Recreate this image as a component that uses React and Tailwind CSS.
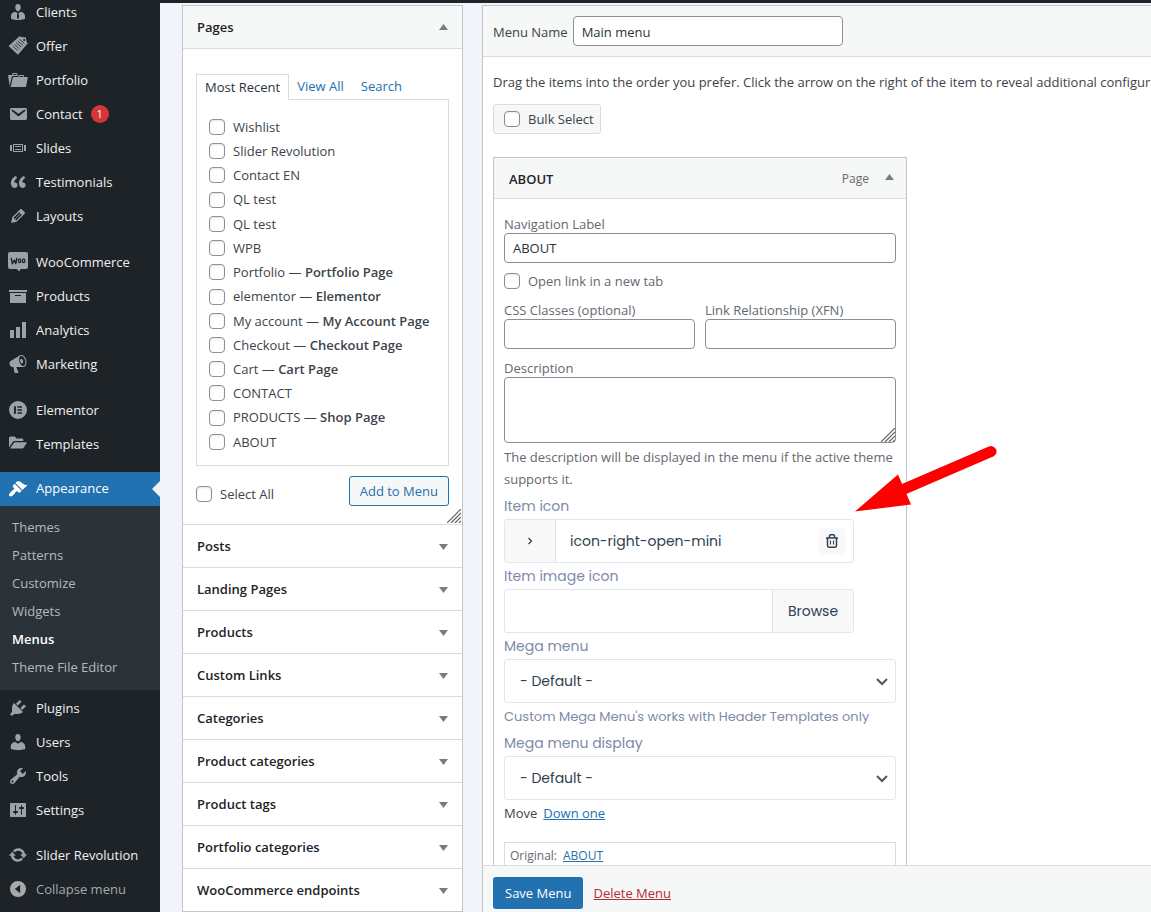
const sidebarGroups = [
  [
    { label: 'Clients', icon: 'businessman' },
    { label: 'Offer', icon: 'offer' },
    { label: 'Portfolio', icon: 'portfolio' },
    { label: 'Contact', icon: 'email', badge: 1 },
    { label: 'Slides', icon: 'slides' },
    { label: 'Testimonials', icon: 'quote' },
    { label: 'Layouts', icon: 'edit' },
  ],
  [
    { label: 'WooCommerce', icon: 'woo' },
    { label: 'Products', icon: 'archive' },
    { label: 'Analytics', icon: 'chart' },
    { label: 'Marketing', icon: 'megaphone' },
  ],
  [
    { label: 'Elementor', icon: 'elementor' },
    { label: 'Templates', icon: 'folder' },
  ],
];

const appearanceLinks = ['Themes', 'Patterns', 'Customize', 'Widgets', 'Menus', 'Theme File Editor'];

const toolItems = [
  { label: 'Plugins', icon: 'plugins' },
  { label: 'Users', icon: 'users' },
  { label: 'Tools', icon: 'tools' },
  { label: 'Settings', icon: 'settings' },
];

const pages = [
  { title: 'Wishlist' },
  { title: 'Slider Revolution' },
  { title: 'Contact EN' },
  { title: 'QL test' },
  { title: 'QL test' },
  { title: 'WPB' },
  { title: 'Portfolio', state: 'Portfolio Page' },
  { title: 'elementor', state: 'Elementor' },
  { title: 'My account', state: 'My Account Page' },
  { title: 'Checkout', state: 'Checkout Page' },
  { title: 'Cart', state: 'Cart Page' },
  { title: 'CONTACT' },
  { title: 'PRODUCTS', state: 'Shop Page' },
  { title: 'ABOUT' },
];

const sections = [
  'Posts',
  'Landing Pages',
  'Products',
  'Custom Links',
  'Categories',
  'Product categories',
  'Product tags',
  'Portfolio categories',
  'WooCommerce endpoints',
];

const iconPaths = {
  businessman:
    'M7.3 6l-.03-.19c-.04-.37-.05-.73-.03-1.08.02-.36.1-.71.25-1.04.14-.32.31-.61.52-.86s.49-.46.83-.6c.34-.15.72-.23 1.13-.23.69 0 1.26.2 1.71.59s.76.87.91 1.44.18 1.16.09 1.78l-.03.19c-.01.09-.05.25-.11.48-.05.24-.12.47-.2.69-.08.21-.19.45-.34.72-.14.27-.3.49-.47.69-.18.19-.4.34-.67.48-.27.13-.55.19-.86.19s-.59-.06-.87-.19c-.26-.13-.49-.29-.67-.5-.18-.2-.34-.42-.49-.66-.15-.25-.26-.49-.34-.73-.09-.25-.16-.47-.21-.67-.06-.21-.1-.37-.12-.5zm9.2 6.24c.41.7.5 1.41.5 2.14v2.49c0 .03-.12.08-.29.13-.18.04-.42.13-.97.27-.55.12-1.1.24-1.65.34s-1.19.19-1.95.27c-.75.08-1.46.12-2.13.12-.68 0-1.39-.04-2.14-.12-.75-.07-1.4-.17-1.98-.27-.58-.11-1.08-.23-1.56-.34-.49-.11-.8-.21-1.06-.29L3 16.87v-2.49c0-.75.07-1.46.46-2.15s.81-1.25 1.5-1.68C5.66 10.12 7.19 10 8 10l1.67 1.67L9 13v3l1.02 1.08L11 16v-3l-.68-1.33L11.97 10c.77 0 2.2.07 2.9.52.71.45 1.21 1.02 1.63 1.72z',
  portfolio:
    'M4 5H.78c-.37 0-.74.32-.69.84l1.56 9.99S3.5 8.47 3.86 6.7c.11-.53.61-.7.98-.7H10s-.7-2.08-.77-2.31C9.11 3.25 8.89 3 8.45 3H5.14c-.36 0-.7.23-.8.64C4.25 4.04 4 5 4 5zm4.88 0h-4s.42-1 .87-1h2.13c.48 0 1 1 1 1zM2.67 16.25c-.31.47-.76.75-1.26.75h15.73c.54 0 .92-.31 1.03-.83.44-2.19 1.68-8.44 1.68-8.44.07-.5-.3-.73-.62-.73H16V5.53c0-.16-.26-.53-.66-.53h-3.76c-.52 0-.87.58-.87.58L10 7H5.59c-.32 0-.63.19-.69.5 0 0-1.59 6.7-1.72 7.33-.07.37-.22.99-.51 1.42zM15.38 7H11s.58-1 1.13-1h2.29c.71 0 .96 1 .96 1z',
  email:
    'M3.87 4h13.25C18.37 4 19 4.59 19 5.79v8.42c0 1.19-.63 1.79-1.88 1.79H3.87c-1.25 0-1.88-.6-1.88-1.79V5.79c0-1.2.63-1.79 1.88-1.79zm6.62 8.6l6.74-5.53c.24-.2.43-.66.13-1.07-.29-.41-.82-.42-1.17-.17l-5.7 3.86L4.8 5.83c-.35-.25-.88-.24-1.17.17-.3.41-.11.87.13 1.07z',
  slides: 'M5 14V6h10v8H5zm-3-1V7h2v6H2zm4-6v6h8V7H6zm10 0h2v6h-2V7zm-3 2V8H7v1h6zm0 3v-1H7v1h6z',
  quote:
    'M9.49 13.22c0-.74-.2-1.38-.61-1.9-.62-.78-1.83-.88-2.53-.72-.29-1.65 1.11-3.75 2.92-4.65L7.88 4c-2.73 1.3-5.42 4.28-4.96 8.05C3.21 14.43 4.59 16 6.54 16c.85 0 1.56-.25 2.12-.75s.83-1.18.83-2.03zm8.05 0c0-.74-.2-1.38-.61-1.9-.63-.78-1.83-.88-2.53-.72-.29-1.65 1.11-3.75 2.92-4.65L15.93 4c-2.73 1.3-5.41 4.28-4.95 8.05.29 2.38 1.66 3.95 3.61 3.95.85 0 1.56-.25 2.12-.75s.83-1.18.83-2.03z',
  edit:
    'M13.89 3.39l2.71 2.72c.46.46.42 1.24.03 1.64l-8.01 8.02-5.56 1.16 1.16-5.58s7.6-7.63 7.99-8.03c.39-.39 1.22-.39 1.68.07zm-2.73 2.79l-5.59 5.61 1.11 1.11 5.54-5.65zm-2.97 8.23l5.58-5.6-1.07-1.08-5.59 5.6z',
  archive: 'M19 4v2H1V4h18zM2 7h16v10H2V7zm11 3V9H7v1h6z',
  chart: 'M18 18V2h-4v16h4zm-6 0V7H8v11h4zm-6 0v-8H2v8h4z',
  megaphone:
    'M18.15 5.94c.46 1.62.38 3.22-.02 4.48-.42 1.28-1.26 2.18-2.3 2.48-.16.06-.26.06-.4.06-.06.02-.12.02-.18.02-.06.02-.14.02-.22.02h-6.8l2.22 5.5c.02.14-.06.26-.14.34-.08.1-.24.16-.34.16H6.95c-.1 0-.26-.06-.34-.16-.08-.08-.16-.2-.14-.34l-1-5.5H4.25l-.02-.02c-.5.06-1.08-.18-1.54-.62s-.88-1.08-1.06-1.88c-.24-.8-.2-1.56-.02-2.2.18-.62.58-1.08 1.06-1.3l.02-.02 9-5.4c.1-.06.18-.1.24-.16.06-.04.14-.08.24-.12.16-.08.28-.12.5-.18 1.04-.3 2.24.1 3.22.98s1.84 2.24 2.26 3.86zm-2.58 5.98h-.02c.4-.1.74-.34 1.04-.7.58-.7.86-1.76.86-3.04 0-.64-.1-1.3-.28-1.98-.34-1.36-1.02-2.5-1.78-3.24s-1.68-1.1-2.46-.88c-.82.22-1.4.96-1.7 2-.32 1.04-.28 2.36.06 3.72.38 1.36 1 2.5 1.8 3.24.78.74 1.62 1.1 2.48.88zm-2.54-7.08c.22-.04.42-.02.62.04.38.16.76.48 1.02 1s.42 1.2.42 1.78c0 .3-.04.56-.12.8-.18.48-.44.84-.86.94-.34.1-.8-.06-1.14-.4s-.64-.86-.78-1.5c-.18-.62-.12-1.24.02-1.72s.48-.84.82-.94z',
  elementor: 'M10 1a9 9 0 100 18 9 9 0 000-18zM6 6.2h1.9v7.6H6V6.2zm3.4 0H14v1.5H9.4V6.2zm0 3H14v1.5H9.4V9.2zm0 3.1H14v1.5H9.4v-1.5z',
  folder: 'M1 13.5V4q0-1.500 1.500-1.500h4.200l1.800 2H14q1.300 0 1.300 1.300V7H7.200Q5.500 7 4.600 8.200L1 13.500zm1 1L5.800 9q.5-.8 1.600-.8h11q.8 0 .3.800l-3 4.700q-.5.800-1.500.800H2z',
  appearance:
    'M14.48 11.06L7.41 3.99l1.5-1.5c.5-.56 2.3-.47 3.51.32 1.21.8 1.43 1.28 2.91 2.1 1.18.64 2.45 1.26 4.45.85zm-.71.71L6.7 4.7 4.93 6.47c-.39.39-.39 1.02 0 1.41l1.06 1.06c.39.39.39 1.03 0 1.42-.6.6-1.43 1.11-2.21 1.69-.35.26-.7.53-1.01.84C1.43 14.23.4 16.08 1.4 17.07c.99 1 2.84-.03 4.18-1.36.31-.31.58-.66.85-1.02.57-.78 1.08-1.61 1.69-2.21.39-.39 1.02-.39 1.41 0l1.06 1.06c.39.39 1.02.39 1.41 0z',
  plugins:
    'M13.11 4.36L9.87 7.6 8 5.73l3.24-3.24c.35-.34 1.05-.2 1.56.32.52.51.66 1.21.31 1.55zm-8 1.77l.91-1.12 9.01 9.01-1.19.84c-.71.71-2.63 1.16-3.82 1.16H6.14L4.9 17.26c-.59.59-1.54.59-2.12 0-.59-.58-.59-1.53 0-2.12l1.24-1.24v-3.88c0-1.13.4-3.19 1.09-3.89zm7.26 3.97l3.24-3.24c.34-.35 1.04-.21 1.55.31.52.51.66 1.21.31 1.55l-3.24 3.25z',
  users:
    'M10 9.25c-2.27 0-2.73-3.44-2.73-3.44C7 4.02 7.82 2 9.97 2c2.16 0 2.98 2.02 2.71 3.81 0 0-.41 3.44-2.68 3.44zm0 2.57L12.72 10c2.39 0 4.52 2.33 4.52 4.53v2.49s-3.65 1.13-7.24 1.13c-3.65 0-7.24-1.13-7.24-1.13v-2.49c0-2.25 1.94-4.48 4.47-4.48z',
  tools:
    'M16.68 9.77c-1.34 1.34-3.3 1.67-4.95.99l-5.41 6.52c-.99.99-2.59.99-3.58 0s-.99-2.59 0-3.57l6.52-5.42c-.68-1.65-.35-3.61.99-4.95 1.28-1.28 3.12-1.62 4.72-1.06l-2.89 2.89 2.82 2.82 2.86-2.87c.53 1.58.18 3.39-1.08 4.65zM3.81 16.21c.4.39 1.04.39 1.43 0 .4-.4.4-1.04 0-1.43-.39-.4-1.03-.4-1.43 0-.39.39-.39 1.03 0 1.43z',
  settings:
    'M18 16V4c0-.55-.45-1-1-1H3c-.55 0-1 .45-1 1v12c0 .55.45 1 1 1h14c.55 0 1-.45 1-1zM8 11h1c.55 0 1 .45 1 1s-.45 1-1 1H8v1.500c0 .28-.22.5-.5.5s-.5-.22-.5-.5V13H6c-.55 0-1-.45-1-1s.45-1 1-1h1V5.500c0-.28.22-.5.5-.5s.5.22.5.5V11zm5-2h-1c-.55 0-1-.45-1-1s.45-1 1-1h1V5.500c0-.28.22-.5.5-.5s.5.22.5.5V7h1c.55 0 1 .45 1 1s-.45 1-1 1h-1v5.500c0 .28-.22.5-.5.5s-.5-.22-.5-.5V9z',
  update:
    'M10.2 3.28c3.53 0 6.43 2.61 6.92 6h2.08l-3.500 4-3.500-4h2.32c-.45-1.97-2.21-3.450-4.32-3.450-1.450 0-2.730.710-3.540 1.780L4.950 5.660C6.230 4.200 8.110 3.280 10.200 3.280zm-.4 13.440c-3.520 0-6.430-2.610-6.920-6H.8l3.500-4c1.170 1.330 2.330 2.670 3.500 4H5.480c.45 1.970 2.210 3.450 4.320 3.450 1.450 0 2.730-.71 3.540-1.780l1.710 1.950c-1.280 1.460-3.150 2.380-5.250 2.380z',
  collapse: 'M10 2a8 8 0 110 16 8 8 0 010-16zm2.200 3.800L6.800 10l5.400 4.200V5.800z',
};

function MenuIcon({ name }) {
  if (name === 'offer') {
    return (
      <svg className="h-5 w-5 shrink-0" viewBox="0 0 20 20" fill="currentColor">
        <path d="M11.500.2l1.500.9 4.800.4.900 4.500 1.200 1.200-10 11.600L.6 10z" />
        <circle cx="16.200" cy="4" r="1.100" fill="#1d2327" />
        <path
          d="M11.500 3.200l4.800 4.300M9.800 4.900l5 4.500M8.100 6.600l5 4.500M6.400 8.300l5 4.500M4.700 10l5 4.500"
          stroke="#1d2327"
          strokeWidth=".8"
        />
      </svg>
    );
  }
  if (name === 'woo') {
    return (
      <svg className="h-5 w-5 shrink-0" viewBox="0 0 20 20">
        <path d="M2 0h16q2 0 2 2v13q0 2-2 2h-5.500l-.9 2.500-3-2.500H2q-2 0-2-2V2q0-2 2-2z" fill="currentColor" />
        <path
          d="M3.200 6.500l1.200 5.200L6.500 8l1.300 3.700 1.100-5.200"
          fill="none"
          stroke="#1d2327"
          strokeWidth="1.400"
          strokeLinecap="round"
          strokeLinejoin="round"
        />
        <ellipse cx="11.700" cy="8.800" rx="1.200" ry="1.900" fill="none" stroke="#1d2327" strokeWidth="1.300" />
        <ellipse cx="15.700" cy="8.800" rx="1.200" ry="1.900" fill="none" stroke="#1d2327" strokeWidth="1.300" />
      </svg>
    );
  }
  return (
    <svg className="h-5 w-5 shrink-0" viewBox="0 0 20 20" fill="currentColor" fillRule="evenodd">
      <path d={iconPaths[name]} />
    </svg>
  );
}

function SidebarItem({ item }) {
  return (
    <li>
      <a href="#" className="flex h-[34px] items-center gap-2 pl-2 text-[#f0f0f1]">
        <span className="pb-px text-[#9ca2a7]">
          <MenuIcon name={item.icon} />
        </span>
        <span className="pt-px">{item.label}</span>
        {item.badge && (
          <span className="flex h-[18px] w-[18px] items-center justify-center rounded-full bg-[#d63638] text-[11px] text-white">
            {item.badge}
          </span>
        )}
      </a>
    </li>
  );
}

function Sidebar() {
  return (
    <nav className="-mt-2 flex w-40 shrink-0 flex-col bg-[#1d2327]">
      {sidebarGroups.map((group, i) => (
        <ul key={i} className={i === 2 ? 'mb-[11px]' : 'mb-3'}>
          {group.map((item) => (
            <SidebarItem key={item.label} item={item} />
          ))}
        </ul>
      ))}
      <a href="#" className="relative flex h-[34px] shrink-0 items-center gap-2 bg-[#2271b1] pl-2 text-white">
        <MenuIcon name="appearance" />
        <span>Appearance</span>
        <span className="absolute right-0 top-[9px] border-y-8 border-r-8 border-y-transparent border-r-[#f0f0f1]" />
      </a>
      <ul className="bg-[#2c3338] pb-2 pt-2">
        {appearanceLinks.map((label) => (
          <li key={label}>
            <a
              href="#"
              className={`flex h-7 items-center pl-3 ${label === 'Menus' ? 'font-semibold text-white' : 'text-[#b4b9be]'}`}
            >
              {label}
            </a>
          </li>
        ))}
      </ul>
      <ul className="mb-[11px] pt-px">
        {toolItems.map((item) => (
          <SidebarItem key={item.label} item={item} />
        ))}
      </ul>
      <ul>
        <SidebarItem item={{ label: 'Slider Revolution', icon: 'update' }} />
      </ul>
      <button type="button" className="flex h-[34px] shrink-0 items-center gap-2 pl-2 text-[#a7aaad]">
        <MenuIcon name="collapse" />
        <span className="pt-px">Collapse menu</span>
      </button>
    </nav>
  );
}

function Checkbox({ children, className = '' }) {
  return (
    <label className={`flex items-center gap-2 ${className}`}>
      <input
        type="checkbox"
        className="h-4 w-4 shrink-0 appearance-none rounded border border-[#8c8f94] bg-white shadow-[inset_0_1px_2px_rgba(0,0,0,0.1)]"
      />
      <span className="pt-px">{children}</span>
    </label>
  );
}

function Caret({ up }) {
  return (
    <svg className="h-2 w-[9px]" viewBox="0 0 9 8" fill="#787c82">
      <path d={up ? 'M4.500 0L9 6H0z' : 'M0 1h9L4.500 7z'} />
    </svg>
  );
}

function ResizeGrip() {
  return (
    <svg
      className="pointer-events-none absolute bottom-px right-px h-[14px] w-[14px]"
      viewBox="0 0 14 14"
      stroke="#606060"
      strokeWidth="1.200"
      fill="none"
    >
      <path d="M0 14L14 0M4 14L14 4M8 14l6-6M12 14l2-2" />
    </svg>
  );
}

function PagesAccordion() {
  return (
    <div className="w-[281px] shrink-0 self-start border border-[#c3c4c7] bg-white">
      <h3>
        <button
          type="button"
          className="flex h-[43px] w-full items-center justify-between border-b border-[#dcdcde] bg-[#f6f7f7] px-[14px] pt-[2px] text-[13px] font-semibold text-[#1d2327]"
        >
          Pages <Caret up />
        </button>
      </h3>
      <div className="relative px-[13px] pb-[18px] pt-[25px]">
        <div className="flex">
          <button type="button" className="z-10 -mb-px h-[26px] border border-b-0 border-[#dcdcde] bg-white px-2 text-[#2c3338]">
            Most Recent
          </button>
          <button type="button" className="px-2 pt-px text-[#2271b1]">
            View All
          </button>
          <button type="button" className="px-[9px] pt-px text-[#2271b1]">
            Search
          </button>
        </div>
        <ul className="flex h-[367px] flex-col justify-between border border-[#dcdcde] px-3 pb-[11px] pt-[15px]">
          {pages.map((page, i) => (
            <li key={i}>
              <Checkbox className="h-6">
                {page.title}
                {page.state && (
                  <>
                    {' — '}
                    <b className="font-semibold">{page.state}</b>
                  </>
                )}
              </Checkbox>
            </li>
          ))}
        </ul>
        <div className="mt-[10px] flex h-[30px] items-center justify-between">
          <Checkbox className="pt-[6px]">Select All</Checkbox>
          <button
            type="button"
            className="h-[30px] rounded-[3px] border border-[#2271b1] bg-[#f6f7f7] px-[10px] pt-[2px] text-[#2271b1]"
          >
            Add to Menu
          </button>
        </div>
        <ResizeGrip />
      </div>
      {sections.map((title) => (
        <h3 key={title}>
          <button
            type="button"
            className="flex h-[43px] w-full items-center justify-between border-t border-[#dcdcde] px-[14px] pt-[2px] text-[13px] font-semibold text-[#1d2327]"
          >
            {title} <Caret />
          </button>
        </h3>
      ))}
    </div>
  );
}

function TextField({ id, label, defaultValue = '', className = '' }) {
  return (
    <div className={className}>
      <label htmlFor={id} className="block h-[18px] leading-[18px]">
        {label}
      </label>
      <input
        id={id}
        type="text"
        defaultValue={defaultValue}
        className="block h-[30px] w-full rounded border border-[#8c8f94] bg-white px-2 text-[13px] text-[#2c3338]"
      />
    </div>
  );
}

function SelectField({ id, label }) {
  return (
    <div>
      <label htmlFor={id} className="flex h-[26px] items-center text-sm text-[#7d8aa8]">
        {label}
      </label>
      <div className="relative">
        <select
          id={id}
          className="block h-11 w-full appearance-none rounded-[3px] border border-[#e1e7ec] bg-white px-[15px] text-sm text-[#304050]"
        >
          <option>- Default -</option>
        </select>
        <svg
          className="pointer-events-none absolute right-2 top-[18px] h-[10px] w-3"
          viewBox="0 0 12 10"
          fill="none"
          stroke="#50575e"
          strokeWidth="2"
        >
          <path d="M1 2l5 5 5-5" />
        </svg>
      </div>
    </div>
  );
}

function MenuItemSettings() {
  return (
    <div className="mt-[23px] w-[414px] border border-[#c3c4c7] bg-white text-[#646970]">
      <div className="flex h-[41px] items-center border-b border-[#dcdcde] bg-[#f6f7f7] pl-[15px] pr-3">
        <span className="flex-1 pt-[3px] font-semibold text-[#1d2327]">ABOUT</span>
        <span className="mr-4 pt-[2px] text-xs">Page</span>
        <Caret up />
      </div>
      <div className="px-[10px] pt-4">
        <TextField id="nav-label" label="Navigation Label" defaultValue="ABOUT" />
        <Checkbox className="mt-[9px] h-[18px]">Open link in a new tab</Checkbox>
        <div className="mt-[11px] grid grid-cols-2 gap-[10px]">
          <TextField id="css-classes" label="CSS Classes (optional)" />
          <TextField id="xfn" label="Link Relationship (XFN)" />
        </div>
        <label htmlFor="description" className="mt-[10px] block h-[18px] leading-[18px]">
          Description
        </label>
        <div className="relative">
          <textarea id="description" className="block h-[66px] w-full resize-none rounded border border-[#8c8f94] bg-white" />
          <ResizeGrip />
        </div>
        <p className="mt-[3px] leading-[22px]">
          The description will be displayed in the menu if the active theme supports it.
        </p>

        <div className="mt-[3px] font-['Poppins','Inter',sans-serif]">
          <label htmlFor="item-icon" className="flex h-[26px] items-center text-sm text-[#7d8aa8]">
            Item icon
          </label>
          <div className="flex h-11 w-[350px] items-center rounded-[3px] border border-[#e1e7ec] bg-white">
            <span className="flex w-[51px] items-center justify-center self-stretch border-r border-[#e1e7ec] bg-[#f8f8f8]">
              <svg className="h-2 w-2" viewBox="0 0 8 8" fill="none" stroke="#304050" strokeWidth="1.200">
                <path d="M2.500 1l3 3-3 3" />
              </svg>
            </span>
            <input
              id="item-icon"
              type="text"
              defaultValue="icon-right-open-mini"
              className="h-full min-w-0 flex-1 px-[14px] text-sm text-[#304050]"
            />
            <button
              type="button"
              aria-label="Remove icon"
              className="mr-2 flex h-[26px] w-[26px] items-center justify-center rounded bg-[#f8f8f8]"
            >
              <svg className="h-[14px] w-3" viewBox="0 0 12 14" fill="none" stroke="#304050" strokeWidth="1.500">
                <path d="M0 4h12M1.500 4v7.500q0 1.700 1.700 1.700h5.600q1.700 0 1.700-1.700V4M3.500 3.700V2q0-1.200 1.200-1.200h2.600Q8.500.8 8.500 2v1.700" />
                <path d="M4.500 6.500v4M7.500 6.500v4" strokeWidth="1.100" />
              </svg>
            </button>
          </div>
          <label htmlFor="item-image" className="flex h-[26px] items-center text-sm text-[#7d8aa8]">
            Item image icon
          </label>
          <div className="flex h-11 w-[350px] rounded-[3px] border border-[#e1e7ec] bg-white">
            <input id="item-image" type="text" className="min-w-0 flex-1 px-[14px]" />
            <button type="button" className="w-[81px] border-l border-[#e1e7ec] bg-[#f8f8f8] text-sm text-[#304050]">
              Browse
            </button>
          </div>
          <SelectField id="mega-menu" label="Mega menu" />
          <p className="flex h-[27px] items-center text-[13px] text-[#7d8aa8]">
            Custom Mega Menu's works with Header Templates only
          </p>
          <SelectField id="mega-display" label="Mega menu display" />
        </div>

        <div className="flex h-[27px] items-center gap-[6px] text-[#3c434a]">
          Move
          <a href="#" className="text-[#2271b1] underline">
            Down one
          </a>
        </div>
        <div className="mt-[15px] flex gap-[6px] border border-[#dcdcde] px-[5px] py-1 text-xs leading-[18px]">
          Original:
          <a href="#" className="text-[#2271b1] underline">
            ABOUT
          </a>
        </div>
      </div>
    </div>
  );
}

function MenuEditor() {
  return (
    <form className="flex min-w-0 flex-1 flex-col border-l border-t border-[#c3c4c7] bg-white">
      <div className="flex h-[51px] shrink-0 items-center gap-[5px] border-b border-[#dcdcde] bg-[#f6f7f7] pl-[10px]">
        <label htmlFor="menu-name" className="pt-[3px]">
          Menu Name
        </label>
        <input
          id="menu-name"
          type="text"
          defaultValue="Main menu"
          className="h-[30px] w-[270px] rounded border border-[#8c8f94] bg-white px-2 pt-px text-[13px] text-[#2c3338]"
        />
      </div>
      <div className="min-h-0 flex-1 overflow-hidden pl-[10px] pt-[15px]">
        <p className="whitespace-nowrap leading-5">
          Drag the items into the order you prefer. Click the arrow on the right of the item to reveal additional configuration options.
        </p>
        <Checkbox className="mt-3 h-[30px] w-fit rounded-[3px] border border-[#dcdcde] bg-[#f6f7f7] pl-[10px] pr-[6px]">
          Bulk Select
        </Checkbox>
        <MenuItemSettings />
      </div>
      <div className="flex h-[47px] shrink-0 items-center gap-[10px] border-t border-[#dcdcde] bg-[#f6f7f7] pl-[10px] pt-2">
        <button type="submit" className="h-8 rounded-[3px] bg-[#2271b1] px-3 pt-[2px] text-white">
          Save Menu
        </button>
        <a href="#" className="pt-[2px] text-[#b32d2e] underline">
          Delete Menu
        </a>
      </div>
    </form>
  );
}

function PointerArrow() {
  return (
    <svg className="pointer-events-none absolute left-[855px] top-[444px] h-[68px] w-[142px]" viewBox="0 0 142 68" fill="#f00">
      <path d="M0 67.500L43 30.500l13 30z" />
      <path d="M48 45.500L136 7.500" stroke="#f00" strokeWidth="11" strokeLinecap="round" />
    </svg>
  );
}

export default function App() {
  return (
    <div className="relative flex h-screen flex-col overflow-hidden bg-[#f1f5f9] font-['Segoe_UI','Open_Sans',sans-serif] text-[13px] text-[#3c434a]">
      <div className="h-[3px] shrink-0 bg-[#1d2327]" />
      <div className="flex min-h-0 flex-1">
        <Sidebar />
        <main className="ml-[22px] mt-[2px] flex min-w-0 flex-1 gap-[19px]">
          <PagesAccordion />
          <MenuEditor />
        </main>
      </div>
      <PointerArrow />
    </div>
  );
}
